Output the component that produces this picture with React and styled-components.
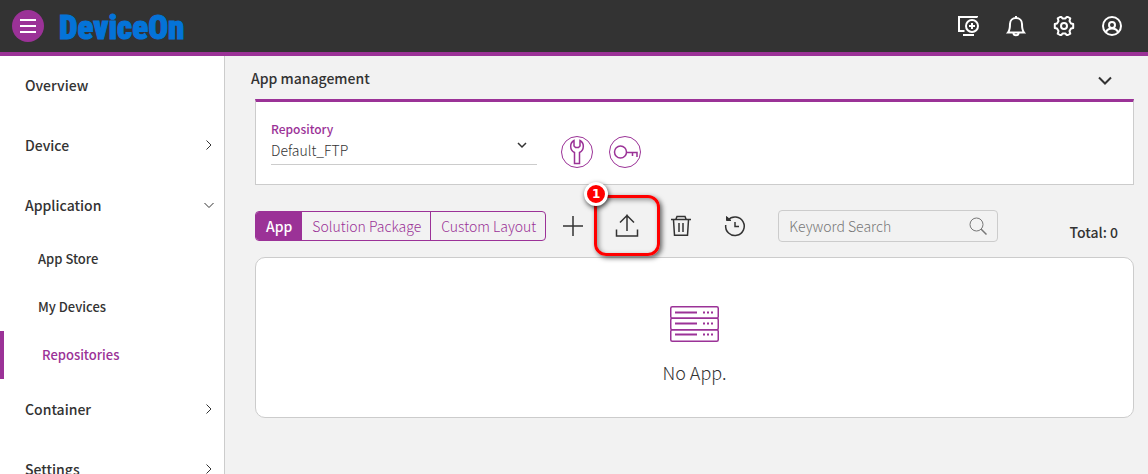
import React from "react";
import styled, { createGlobalStyle, css } from "styled-components";

const purple = "#9b3297";
const ink = "#333333";
const line = "#cccccc";

const GlobalStyle = createGlobalStyle`
  *, *::before, *::after { box-sizing: border-box; }
  body {
    margin: 0;
    background: #f2f2f2;
    color: ${ink};
    font-family: "Noto Sans CJK TC", "Noto Sans", sans-serif;
    font-size: 14px;
    line-height: 20px;
    font-weight: 300;
  }
  button, input, select { font: inherit; color: inherit; }
  h1, ul, p { margin: 0; padding: 0; }
  ul { list-style: none; }
`;

const Page = styled.div`
  display: flex;
  flex-direction: column;
  height: 100vh;
`;

const Header = styled.header`
  flex: none;
  display: flex;
  align-items: center;
  height: 56px;
  padding: 0 20px 0 12px;
  background: #333333;
  border-bottom: 4px solid ${purple};
`;

const MenuButton = styled.button`
  display: grid;
  place-items: center;
  width: 32px;
  height: 32px;
  padding: 0;
  border: 0;
  border-radius: 50%;
  background: ${purple};
`;

const Logo = styled.a`
  flex: 1;
  margin-left: 15px;
  padding-top: 4px;
  color: #0473d8;
  font-family: "Liberation Sans Narrow", "Roboto Condensed", "Liberation Sans", sans-serif;
  font-size: 33px;
  line-height: 36px;
  font-weight: 900;
  text-decoration: none;
  -webkit-text-stroke: 1px #0473d8;
`;

const HeaderActions = styled.div`
  display: flex;
  gap: 16px;
`;

const HeaderButton = styled.button`
  display: grid;
  place-items: center;
  width: 32px;
  height: 32px;
  padding: 0;
  border: 0;
  background: none;
  color: #ffffff;
`;

const Body = styled.div`
  flex: 1;
  display: flex;
  min-height: 0;
`;

const Sidebar = styled.nav`
  flex: none;
  width: 225px;
  overflow: auto;
  scrollbar-width: none;
  background: #ffffff;
  border-right: 1px solid ${line};
`;

const NavList = styled.ul`
  margin-top: -1px;
`;

const NavItem = styled.a`
  display: flex;
  align-items: center;
  justify-content: space-between;
  height: 60px;
  padding: 0 8px 0 25px;
  color: ${ink};
  font-weight: 500;
  text-decoration: none;
`;

const SubItem = styled.a`
  display: flex;
  align-items: center;
  height: 48px;
  padding-left: 38px;
  color: ${ink};
  font-size: 13px;
  font-weight: 500;
  text-decoration: none;
  ${(p) =>
    p.$active &&
    css`
      color: ${purple};
      border-left: 4px solid ${purple};
    `}
`;

const Main = styled.main`
  flex: 1;
  min-width: 0;
  padding: 0 14px 0 30px;
  overflow: auto;
`;

const TitleBar = styled.div`
  display: flex;
  align-items: center;
  justify-content: space-between;
  height: 43px;
  padding-right: 20px;
  margin-left: -4px;
`;

const Title = styled.h1`
  font-size: 14px;
  line-height: 20px;
  font-weight: 500;
`;

const PlainButton = styled.button`
  display: grid;
  place-items: center;
  padding: 6px 0 0;
  border: 0;
  background: none;
`;

const RepositoryCard = styled.section`
  display: flex;
  align-items: flex-start;
  height: 86px;
  padding: 17px 15px 0;
  background: #ffffff;
  border: 1px solid ${line};
  border-top: 3px solid ${purple};
`;

const SelectField = styled.div`
  position: relative;
  display: flex;
  flex-direction: column;
  width: 266px;
  margin-right: 24px;
`;

const FieldLabel = styled.label`
  color: ${purple};
  font-size: 12px;
  font-weight: 500;
`;

const Select = styled.select`
  appearance: none;
  height: 26px;
  padding: 0 24px 4px 0;
  border: 0;
  border-bottom: 1px solid ${line};
  border-radius: 0;
  background: none;
`;

const SelectArrow = styled.svg`
  position: absolute;
  right: 10px;
  bottom: 16px;
  pointer-events: none;
`;

const RoundButton = styled.button`
  display: grid;
  place-items: center;
  width: 32px;
  height: 32px;
  margin: 17px 16px 0 0;
  padding: 0;
  border: 1px solid ${purple};
  border-radius: 50%;
  background: none;
  color: ${purple};
`;

const Toolbar = styled.div`
  display: flex;
  align-items: center;
  height: 32px;
  margin: 25px 0 15px;
`;

const Tabs = styled.div`
  display: flex;
  height: 30px;
  border: 1px solid ${purple};
  border-radius: 4px;
  overflow: hidden;
`;

const Tab = styled.button`
  padding: 0 9px 0 10px;
  border: 0;
  background: ${(p) => (p.$active ? purple : "none")};
  color: ${(p) => (p.$active ? "#ffffff" : purple)};
  font-weight: ${(p) => (p.$active ? 500 : 300)};
  & + & { border-left: 1px solid ${purple}; }
`;

const ToolButton = styled.button`
  position: relative;
  display: grid;
  place-items: center;
  width: 54px;
  height: 32px;
  padding: 0;
  border: 0;
  background: none;
`;

const Highlight = styled.span`
  position: absolute;
  top: -15px;
  left: -6px;
  width: 66px;
  height: 61px;
  border: 3px solid #ff0000;
  border-radius: 12px;
  box-shadow: 2px 2px 5px rgba(0, 0, 0, 0.6), inset 2px 2px 5px rgba(0, 0, 0, 0.4);
`;

const StepBadge = styled.span`
  position: absolute;
  top: -28px;
  left: -16px;
  width: 24px;
  height: 24px;
  border: 3px solid #ffffff;
  border-radius: 50%;
  background: #ff0000;
  box-shadow: 1px 2px 5px rgba(0, 0, 0, 0.7);
  color: #ffffff;
  font-family: "DejaVu Sans", sans-serif;
  font-size: 12px;
  line-height: 18px;
  font-weight: 700;
  text-align: center;
`;

const SearchBox = styled.div`
  display: flex;
  align-items: center;
  width: 220px;
  height: 32px;
  margin-left: 16px;
  padding: 0 10px;
  border: 1px solid ${line};
  border-radius: 4px;
  color: #777777;
`;

const SearchInput = styled.input`
  flex: 1;
  min-width: 0;
  padding: 0;
  border: 0;
  outline: 0;
  background: none;
  &::placeholder { color: #777777; opacity: 1; }
`;

const Total = styled.span`
  align-self: flex-end;
  margin-left: auto;
  padding-right: 16px;
  font-weight: 500;
`;

const EmptyPanel = styled.section`
  display: flex;
  flex-direction: column;
  align-items: center;
  padding: 48px 16px 32px;
  background: #ffffff;
  border: 1px solid ${line};
  border-radius: 10px;
`;

const EmptyText = styled.p`
  margin-top: 17px;
  font-size: 18px;
  line-height: 26px;
`;

const Stroke = ({ size = 24, w = 2, children, ...rest }) => (
  <svg
    width={size}
    height={size}
    viewBox={`0 0 ${size} ${size}`}
    fill="none"
    stroke="currentColor"
    strokeWidth={w}
    aria-hidden="true"
    {...rest}
  >
    {children}
  </svg>
);

const NavArrow = ({ open }) => (
  <Stroke size={14} w={1}>
    <path d={open ? "M2.5 5L7 9.5L11.5 5" : "M4.5 2.5L9 7L4.5 11.5"} />
  </Stroke>
);

const navItems = [
  { label: "Overview" },
  { label: "Device", arrow: true },
  {
    label: "Application",
    arrow: true,
    children: ["App Store", "My Devices", "Repositories"],
  },
  { label: "Container", arrow: true },
  { label: "Settings", arrow: true },
];

export default function App() {
  return (
    <Page>
      <GlobalStyle />
      <Header>
        <MenuButton aria-label="Menu">
          <Stroke size={16} stroke="#ffffff">
            <path d="M0 2H16M0 8H16M0 14H16" />
          </Stroke>
        </MenuButton>
        <Logo href="#">DeviceOn</Logo>
        <HeaderActions>
          <HeaderButton aria-label="Add device">
            <Stroke>
              <path d="M21 3.5V3H3V17H8.5M7 21H18" />
              <circle cx="16" cy="12" r="6" />
              <path d="M16 9V15M13 12H19" />
            </Stroke>
          </HeaderButton>
          <HeaderButton aria-label="Notifications">
            <Stroke>
              <path d="M12 2V4M4 18.5H20C18 16 18 14 18 10C18 6.300 15.500 4 12 4S6 6.300 6 10C6 14 6 16 4 18.500Z" />
              <path d="M9.500 19C9.500 22 14.500 22 14.500 19" />
            </Stroke>
          </HeaderButton>
          <HeaderButton aria-label="Settings">
            <Stroke>
              <path
                strokeLinejoin="round"
                d="M8 3H9.500L10.500 4.500H13.500L14.500 3H16L18.300 4.300L17.500 7L19 9.500L21.200 10V14L19 14.500L17.500 17L18.300 19.700L16 21H14.500L13.500 19.500H10.500L9.500 21H8L5.700 19.700L6.500 17L5 14.500L2.800 14V10L5 9.500L6.500 7L5.700 4.300Z"
              />
              <circle cx="12" cy="12" r="3" />
            </Stroke>
          </HeaderButton>
          <HeaderButton aria-label="Account">
            <Stroke>
              <circle cx="12" cy="12" r="9" />
              <circle cx="12" cy="11" r="3" />
              <path d="M6 18C7.500 14.500 10 14.500 12 14.500S16.500 14.500 18 18" />
            </Stroke>
          </HeaderButton>
        </HeaderActions>
      </Header>
      <Body>
        <Sidebar aria-label="Main">
          <NavList>
            {navItems.map(({ label, arrow, children }) => (
              <li key={label}>
                <NavItem href="#">
                  {label}
                  {arrow && <NavArrow open={!!children} />}
                </NavItem>
                {children && (
                  <ul>
                    {children.map((child) => (
                      <li key={child}>
                        <SubItem href="#" $active={child === "Repositories"}>
                          {child}
                        </SubItem>
                      </li>
                    ))}
                  </ul>
                )}
              </li>
            ))}
          </NavList>
        </Sidebar>
        <Main>
          <TitleBar>
            <Title>App management</Title>
            <PlainButton aria-label="Collapse">
              <Stroke size={18}>
                <path d="M3 5.500L9 11.500L15 5.500" />
              </Stroke>
            </PlainButton>
          </TitleBar>
          <RepositoryCard>
            <SelectField>
              <FieldLabel htmlFor="repository">Repository</FieldLabel>
              <Select id="repository">
                <option>Default_FTP</option>
              </Select>
              <SelectArrow width="10" height="8" viewBox="0 0 10 8" fill="none" stroke={ink} strokeWidth="1.500">
                <path d="M1 2L5 6L9 2" />
              </SelectArrow>
            </SelectField>
            <RoundButton aria-label="Configure">
              <Stroke size={30} w={1.5}>
                <path d="M12.500 26.500V15.500C7.500 13 7.500 6 12 3.500V9L13.500 10.500H16.500L18 9V3.500C22.500 6 22.500 13 17.500 15.500V26.500Z" />
              </Stroke>
            </RoundButton>
            <RoundButton aria-label="Access key">
              <Stroke size={30} w={1.5}>
                <circle cx="10.500" cy="15" r="6" />
                <path d="M16.500 15.500H27V20M22.500 15.500V19" />
              </Stroke>
            </RoundButton>
          </RepositoryCard>
          <Toolbar>
            <Tabs>
              <Tab $active>App</Tab>
              <Tab>Solution Package</Tab>
              <Tab>Custom Layout</Tab>
            </Tabs>
            <ToolButton aria-label="Add">
              <Stroke w={1.5}>
                <path d="M12 2V22M2 12H22" />
              </Stroke>
            </ToolButton>
            <ToolButton aria-label="Upload">
              <Stroke w={1.5}>
                <path d="M12 17V0.500M5 8.500L12 1.500L19 8.500M1.500 15.500V22H22.500V15.500" />
              </Stroke>
              <Highlight />
              <StepBadge>1</StepBadge>
            </ToolButton>
            <ToolButton aria-label="Delete">
              <Stroke w={1.5}>
                <path d="M2 5.500H22M7 5L8 2.500H16L17 5M4.500 6L5.500 21.200H18.500L19.500 6M10 9V18M14 9V18" />
              </Stroke>
            </ToolButton>
            <ToolButton aria-label="History">
              <Stroke w={1.5}>
                <path d="M2.700 11A9.300 9.300 0 1 0 5 6M12 8V12.500H16" />
                <path d="M3.500 2.500V6.500H8Z" fill="currentColor" strokeWidth="1" />
              </Stroke>
            </ToolButton>
            <SearchBox>
              <SearchInput aria-label="Keyword Search" placeholder="Keyword Search" />
              <Stroke size={18} w={1}>
                <circle cx="7.500" cy="7.500" r="6.500" />
                <path d="M12 12L17.500 17.500" strokeWidth="1.500" />
              </Stroke>
            </SearchBox>
            <Total>Total: 0</Total>
          </Toolbar>
          <EmptyPanel>
            <svg width="49" height="36" viewBox="0 0 49 36" fill="none" stroke={purple} aria-hidden="true">
              <rect x="0.750" y="0.750" width="47.500" height="11.500" rx="1.500" strokeWidth="1.500" />
              <rect x="0.750" y="12.250" width="47.500" height="11.500" rx="1.500" strokeWidth="1.500" />
              <rect x="0.750" y="23.750" width="47.500" height="11.500" rx="1.500" strokeWidth="1.500" />
              <path d="M5 6.500H27M5 17.500H27M5 28.500H27" strokeWidth="2" />
              <path d="M33 6.500H43M33 17.500H43M33 28.500H43" strokeWidth="2" strokeDasharray="2 2" />
            </svg>
            <EmptyText>No App.</EmptyText>
          </EmptyPanel>
        </Main>
      </Body>
    </Page>
  );
}
